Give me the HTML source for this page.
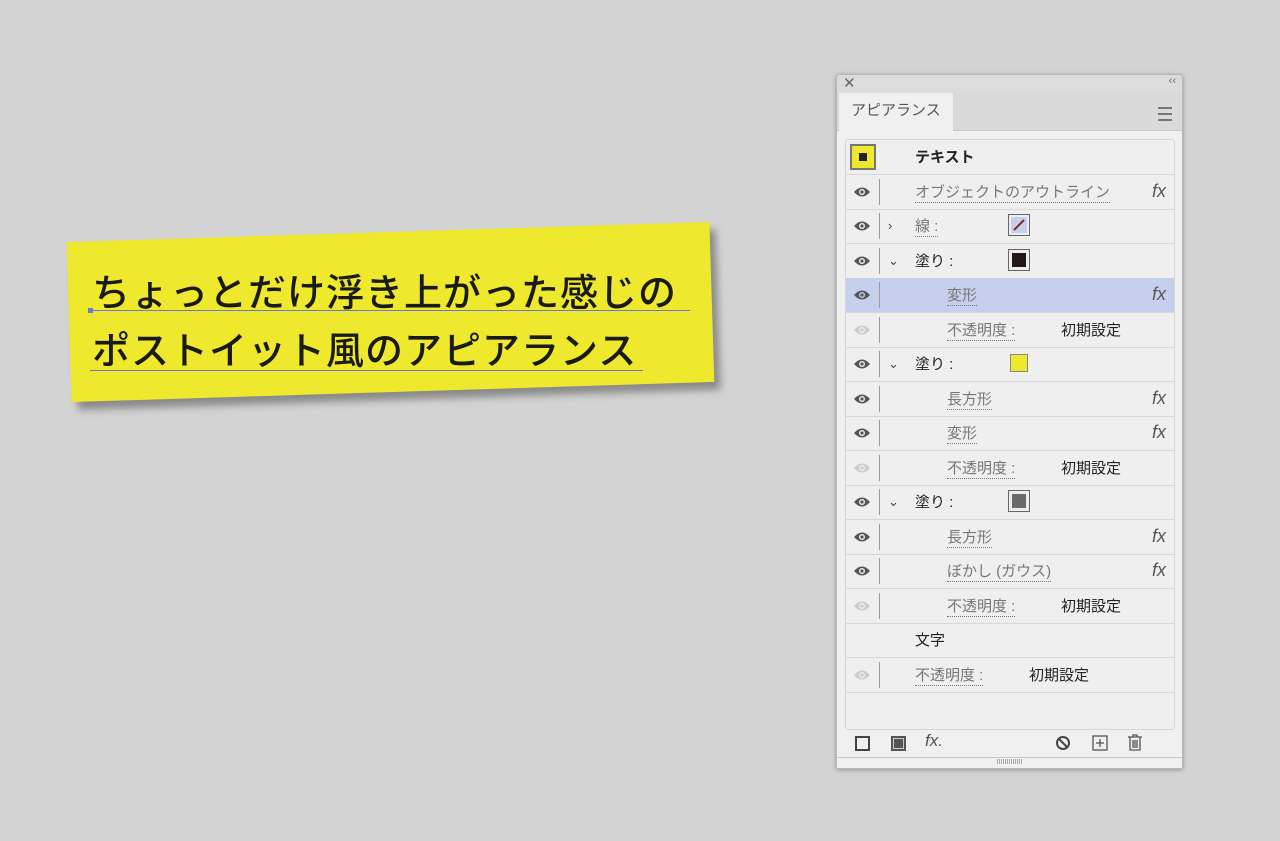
<!DOCTYPE html>
<html><head><meta charset="utf-8"><style>
body{margin:0;width:1280px;height:841px;background:#d3d3d3;position:relative;overflow:hidden;font-family:"Liberation Sans","Noto Sans CJK JP",sans-serif}
.note{position:absolute;left:69px;top:232px;width:643px;height:160px;background:#efe92d;transform:rotate(-1.8deg);box-shadow:6px 8px 8px rgba(0,0,0,.35)}
.t{position:absolute;font-size:38px;color:#1a1a1a;font-weight:500;letter-spacing:1px;white-space:nowrap}
.ul{position:absolute;height:1px;background:#6b78d8}
.panel{position:absolute;left:836px;top:74px;width:345px;height:693px;background:#f0f0f0;border:1px solid #b8b8b8;border-radius:4px 4px 0 0;box-shadow:0 1px 4px rgba(0,0,0,.3)}
.titlebar{position:absolute;left:0;top:0;width:345px;height:18px;background:#dcdcdc;border-bottom:1px solid #c8c8c8;border-radius:4px 4px 0 0}
.tabrow{position:absolute;left:0;top:18px;width:345px;height:37px;background:#dadada;border-bottom:1px solid #c8c8c8}
.tab{position:absolute;left:2px;top:0;width:114px;height:38px;background:#f0f0f0;font-size:15px;color:#555;line-height:36px;text-indent:12px}
.box{position:absolute;left:8px;top:64px;width:328px;height:589px;border:1px solid #d6d6d6;border-radius:3px;background:#efefef}
.row{position:absolute;left:0;width:328px;height:34px;border-bottom:1px solid #d8d8d8;font-size:15px;color:#222}
.row.hl{background:#c6d0ec}
.eye{position:absolute;left:7px;top:11px;width:18px;height:12px}
.sep{position:absolute;left:33px;top:4px;width:1px;height:26px;background:#999}
.lbl{position:absolute;top:9px;color:#777;border-bottom:1px dotted #777;line-height:18px}
.val{position:absolute;top:9px;color:#222;line-height:18px}
.fx{position:absolute;right:8px;top:6px;font-family:"Liberation Sans",sans-serif;font-style:italic;font-size:18px;color:#555}
.sw{position:absolute;left:162px;top:5px;width:20px;height:20px;border:1px solid #666;background:#eee}
.sw i{position:absolute;left:3px;top:3px;width:14px;height:14px}
.chev{position:absolute;left:42px;top:9px;font-size:13px;color:#444}
</style></head><body>
<div class="note"></div>
<div class="t" style="left:92px;top:262px">ちょっとだけ浮き上がった感じの</div>
<div class="ul" style="left:90px;top:310px;width:600px"></div>
<div style="position:absolute;left:88px;top:308px;width:5px;height:5px;background:#6b78d8"></div>
<div class="t" style="left:92px;top:320px">ポストイット風のアピアランス</div>
<div class="ul" style="left:90px;top:370px;width:553px"></div>

<div class="panel">
<div class="titlebar"><span style="position:absolute;left:6px;top:-1px;font-size:15px;color:#666">✕</span><span style="position:absolute;right:6px;top:0;font-size:11px;color:#666">‹‹</span></div>
<div class="tabrow"><div class="tab">アピアランス</div>
<div style="position:absolute;right:10px;top:14px;width:14px;height:10px;border-top:2px solid #777;border-bottom:2px solid #777"><div style="margin-top:4px;height:2px;background:#777"></div></div></div>
<div class="box">
<div class="row" style="top:0"><div style="position:absolute;left:4px;top:4px;width:22px;height:22px;border:2px solid #777;background:#efe92d"><div style="position:absolute;left:7px;top:7px;width:8px;height:8px;background:#222"></div></div><div class="val" style="left:69px;font-weight:bold">テキスト</div></div>
<div class="row" style="top:34.5px"><svg class="eye" viewBox="0 0 18 12"><path d="M1 6Q9-3 17 6Q9 15 1 6Z" fill="#555"/><circle cx="9" cy="6" r="3" fill="#eee"/><circle cx="9" cy="6" r="1.6" fill="#555"/></svg><div class="sep"></div><div class="lbl" style="left:69px">オブジェクトのアウトライン</div><div class="fx">fx</div></div>
<div class="row" style="top:69px"><svg class="eye" viewBox="0 0 18 12"><path d="M1 6Q9-3 17 6Q9 15 1 6Z" fill="#555"/><circle cx="9" cy="6" r="3" fill="#eee"/><circle cx="9" cy="6" r="1.6" fill="#555"/></svg><div class="sep"></div><div class="chev">›</div><div class="lbl" style="left:69px">線 :</div><div class="sw"><svg style="position:absolute;left:2px;top:2px" width="16" height="16"><rect width="16" height="16" fill="#c6d0ec"/><line x1="3" y1="13" x2="13" y2="3" stroke="#7a2a1a" stroke-width="2"/></svg></div></div>
<div class="row" style="top:103.5px"><svg class="eye" viewBox="0 0 18 12"><path d="M1 6Q9-3 17 6Q9 15 1 6Z" fill="#555"/><circle cx="9" cy="6" r="3" fill="#eee"/><circle cx="9" cy="6" r="1.6" fill="#555"/></svg><div class="sep"></div><div class="chev">⌄</div><div class="val" style="left:69px">塗り :</div><div class="sw"><i style="background:#231815"></i></div></div>
<div class="row hl" style="top:138px"><svg class="eye" viewBox="0 0 18 12"><path d="M1 6Q9-3 17 6Q9 15 1 6Z" fill="#555"/><circle cx="9" cy="6" r="3" fill="#c6d0ec"/><circle cx="9" cy="6" r="1.6" fill="#555"/></svg><div class="sep"></div><div class="lbl" style="left:101px">変形</div><div class="fx">fx</div></div>
<div class="row" style="top:172.5px"><svg class="eye" viewBox="0 0 18 12"><path d="M1 6Q9-3 17 6Q9 15 1 6Z" fill="#ccc"/><circle cx="9" cy="6" r="3" fill="#eee"/><circle cx="9" cy="6" r="1.6" fill="#ccc"/></svg><div class="sep"></div><div class="lbl" style="left:101px">不透明度 :</div><div class="val" style="left:215px">初期設定</div></div>
<div class="row" style="top:207px"><svg class="eye" viewBox="0 0 18 12"><path d="M1 6Q9-3 17 6Q9 15 1 6Z" fill="#555"/><circle cx="9" cy="6" r="3" fill="#eee"/><circle cx="9" cy="6" r="1.6" fill="#555"/></svg><div class="sep"></div><div class="chev">⌄</div><div class="val" style="left:69px">塗り :</div><div class="sw" style="border:1px solid #888;background:#efe92d;width:16px;height:16px;left:164px;top:7px"></div></div>
<div class="row" style="top:241.5px"><svg class="eye" viewBox="0 0 18 12"><path d="M1 6Q9-3 17 6Q9 15 1 6Z" fill="#555"/><circle cx="9" cy="6" r="3" fill="#eee"/><circle cx="9" cy="6" r="1.6" fill="#555"/></svg><div class="sep"></div><div class="lbl" style="left:101px">長方形</div><div class="fx">fx</div></div>
<div class="row" style="top:276px"><svg class="eye" viewBox="0 0 18 12"><path d="M1 6Q9-3 17 6Q9 15 1 6Z" fill="#555"/><circle cx="9" cy="6" r="3" fill="#eee"/><circle cx="9" cy="6" r="1.6" fill="#555"/></svg><div class="sep"></div><div class="lbl" style="left:101px">変形</div><div class="fx">fx</div></div>
<div class="row" style="top:310.5px"><svg class="eye" viewBox="0 0 18 12"><path d="M1 6Q9-3 17 6Q9 15 1 6Z" fill="#ccc"/><circle cx="9" cy="6" r="3" fill="#eee"/><circle cx="9" cy="6" r="1.6" fill="#ccc"/></svg><div class="sep"></div><div class="lbl" style="left:101px">不透明度 :</div><div class="val" style="left:215px">初期設定</div></div>
<div class="row" style="top:345px"><svg class="eye" viewBox="0 0 18 12"><path d="M1 6Q9-3 17 6Q9 15 1 6Z" fill="#555"/><circle cx="9" cy="6" r="3" fill="#eee"/><circle cx="9" cy="6" r="1.6" fill="#555"/></svg><div class="sep"></div><div class="chev">⌄</div><div class="val" style="left:69px">塗り :</div><div class="sw"><i style="background:#6a6a6a"></i></div></div>
<div class="row" style="top:379.5px"><svg class="eye" viewBox="0 0 18 12"><path d="M1 6Q9-3 17 6Q9 15 1 6Z" fill="#555"/><circle cx="9" cy="6" r="3" fill="#eee"/><circle cx="9" cy="6" r="1.6" fill="#555"/></svg><div class="sep"></div><div class="lbl" style="left:101px">長方形</div><div class="fx">fx</div></div>
<div class="row" style="top:414px"><svg class="eye" viewBox="0 0 18 12"><path d="M1 6Q9-3 17 6Q9 15 1 6Z" fill="#555"/><circle cx="9" cy="6" r="3" fill="#eee"/><circle cx="9" cy="6" r="1.6" fill="#555"/></svg><div class="sep"></div><div class="lbl" style="left:101px">ぼかし (ガウス)</div><div class="fx">fx</div></div>
<div class="row" style="top:448.5px"><svg class="eye" viewBox="0 0 18 12"><path d="M1 6Q9-3 17 6Q9 15 1 6Z" fill="#ccc"/><circle cx="9" cy="6" r="3" fill="#eee"/><circle cx="9" cy="6" r="1.6" fill="#ccc"/></svg><div class="sep"></div><div class="lbl" style="left:101px">不透明度 :</div><div class="val" style="left:215px">初期設定</div></div>
<div class="row" style="top:483px"><div class="val" style="left:69px">文字</div></div>
<div class="row" style="top:517.5px"><svg class="eye" viewBox="0 0 18 12"><path d="M1 6Q9-3 17 6Q9 15 1 6Z" fill="#ccc"/><circle cx="9" cy="6" r="3" fill="#eee"/><circle cx="9" cy="6" r="1.6" fill="#ccc"/></svg><div class="sep"></div><div class="lbl" style="left:69px">不透明度 :</div><div class="val" style="left:183px">初期設定</div></div>
</div>
<div style="position:absolute;left:18px;top:661px;width:11px;height:11px;border:2px solid #444"></div>
<div style="position:absolute;left:54px;top:661px;width:11px;height:11px;border:2px solid #555;background:#555;box-shadow:inset 0 0 0 1px #ccc"></div>
<div style="position:absolute;left:88px;top:656px;font-family:'Liberation Sans',sans-serif;font-style:italic;font-size:17px;color:#555">fx.</div>
<svg style="position:absolute;left:218px;top:660px" width="16" height="16"><circle cx="8" cy="8" r="6" fill="none" stroke="#444" stroke-width="2"/><line x1="4" y1="4" x2="12" y2="12" stroke="#444" stroke-width="2"/></svg>
<svg style="position:absolute;left:255px;top:660px" width="16" height="16"><rect x="1" y="1" width="14" height="14" fill="none" stroke="#555" stroke-width="1.3"/><path d="M8 4V12M4 8H12" stroke="#555" stroke-width="1.3"/></svg>
<svg style="position:absolute;left:290px;top:659px" width="16" height="18"><path d="M1 3H15M6 3V1H10V3M3 3V16H13V3M6 6V14M8 6V14M10 6V14" fill="none" stroke="#555" stroke-width="1.3"/></svg>
<div style="position:absolute;left:0;top:682px;width:345px;height:1px;background:#c8c8c8"></div>
<div style="position:absolute;left:160px;top:684px;width:26px;height:5px;background:repeating-linear-gradient(90deg,#aaa 0 1px,transparent 1px 2px)"></div>
</div>
</body></html>
